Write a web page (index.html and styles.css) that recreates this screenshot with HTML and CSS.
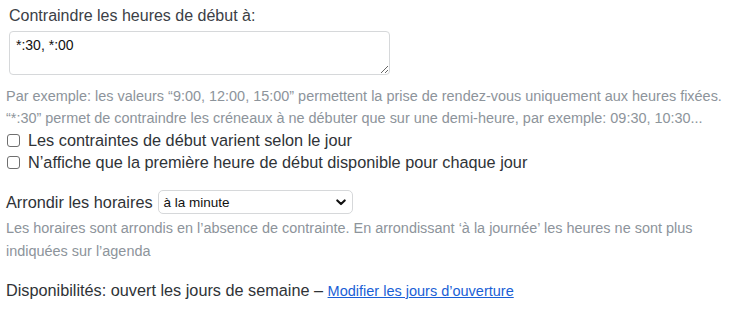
FILE: index.html
```html
<!DOCTYPE html>
<html lang="fr">
<head>
<meta charset="utf-8">
<link rel="stylesheet" href="styles.css">
</head>
<body>
<div class="page">
  <div class="field">
    <label class="label" for="starts">Contraindre les heures de début à:</label>
    <textarea id="starts" class="textarea">*:30, *:00</textarea>
  </div>
  <p class="help help-first">Par exemple: les valeurs “9:00, 12:00, 15:00” permettent la prise de rendez-vous uniquement aux heures fixées.</p>
  <p class="help">“*:30” permet de contraindre les créneaux à ne débuter que sur une demi-heure, par exemple: 09:30, 10:30...</p>
  <label class="check"><span class="box"></span>Les contraintes de début varient selon le jour</label>
  <label class="check"><span class="box"></span>N’affiche que la première heure de début disponible pour chaque jour</label>

  <div class="round-row">
    <span class="round-label">Arrondir les horaires</span>
    <span class="select">
      <span class="select-text">à la minute</span>
      <svg class="chev" width="10" height="7" viewBox="0 0 10 7"><path d="M1.3 1.4 L5 5.1 L8.7 1.4" fill="none" stroke="#111" stroke-width="2.1" stroke-linecap="round" stroke-linejoin="round"/></svg>
    </span>
  </div>
  <p class="help help-round">Les horaires sont arrondis en l’absence de contrainte. En arrondissant ‘à la journée’ les heures ne sont plus indiquées sur l’agenda</p>

  <p class="dispo">Disponibilités: ouvert les jours de semaine – <a class="link" href="#">Modifier les jours d’ouverture</a></p>
</div>
</body>
</html>
```

FILE: styles.css
```css
html, body {
  margin: 0;
  padding: 0;
  background: #ffffff;
}
body {
  font-family: "Liberation Sans", Arial, sans-serif;
  color: #363b40;
}
.page {
  padding: 4px 6px 0 6px;
}
.field {
  padding-left: 3px;
  display: flex;
  flex-direction: column;
  align-items: flex-start;
}
.label {
  font-size: 16px;
  line-height: 24px;
  color: #3b4046;
}
.textarea {
  margin-top: 3px;
  box-sizing: border-box;
  width: 381px;
  height: 44px;
  border: 1px solid #d6d8da;
  border-radius: 4px;
  padding: 5px 6px;
  font-family: "Liberation Sans", Arial, sans-serif;
  font-size: 14px;
  line-height: 17px;
  color: #111;
  resize: vertical;
}
.help {
  margin: 0;
  font-size: 14.45px;
  line-height: 22px;
  color: #8d949b;
  white-space: nowrap;
}
.help-first {
  margin-top: 10px;
}
.check {
  display: flex;
  align-items: center;
  font-size: 16.3px;
  line-height: 22px;
  color: #2f3337;
}
.box {
  box-sizing: border-box;
  width: 13px;
  height: 13px;
  border: 1px solid #6f6f6f;
  border-radius: 3px;
  margin: 0 8px 0 1px;
  flex: none;
}
.round-row {
  margin-top: 17px;
  display: flex;
  align-items: center;
  gap: 5px;
}
.round-label {
  font-size: 16.3px;
  line-height: 24px;
  color: #2f3337;
}
.select {
  position: relative;
  box-sizing: border-box;
  width: 195px;
  height: 24px;
  border: 1px solid #d6d8da;
  border-radius: 5px;
  display: flex;
  align-items: center;
  padding-left: 5px;
  font-size: 13.5px;
  color: #111;
}
.chev {
  position: absolute;
  right: 6px;
  top: 8px;
}
.help-round {
  white-space: normal;
  line-height: 23px;
  margin-top: 3px;
  max-width: 718px;
}
.dispo {
  margin: 15px 0 0 0;
  font-size: 16.25px;
  line-height: 24px;
  color: #2f3337;
}
.link {
  color: #1a5fd6;
  text-decoration: underline;
  font-size: 14.5px;
}
```
